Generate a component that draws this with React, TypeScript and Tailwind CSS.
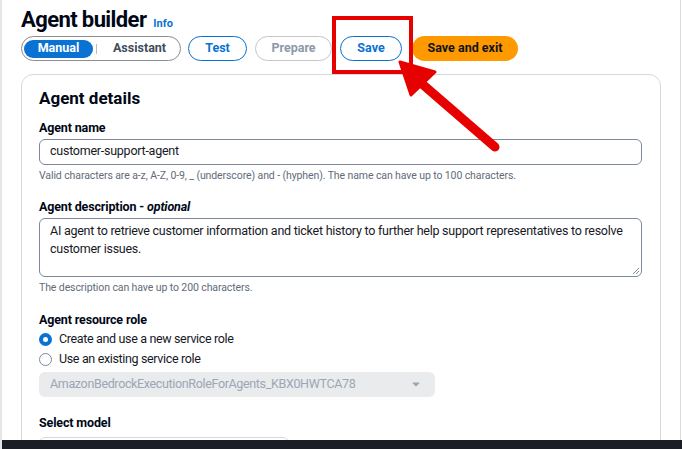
import { FaCaretDown } from "react-icons/fa";

const Radio = ({ checked, label }: { checked?: boolean; label: string }) => (
  <label className="flex items-center gap-[7px] h-[20px]">
    {checked ? (
      <span className="w-[13px] h-[13px] rounded-full bg-[#0972d3] flex items-center justify-center">
        <span className="w-[5px] h-[5px] rounded-full bg-white" />
      </span>
    ) : (
      <span className="w-[13px] h-[13px] rounded-full border-[1.5px] border-[#7d8998] bg-white" />
    )}
    <span className="text-[12.5px] tracking-[-0.35px] text-[#16191f]">{label}</span>
  </label>
);

const App = () => {
  return (
    <div
      className="relative w-[682px] h-[449px] overflow-hidden bg-white border-l-[2px] border-[#e4e6e8]"
      style={{ fontFamily: 'Roboto, "Open Sans", sans-serif' }}
    >
      <div className="absolute top-0 right-[1px] w-px h-full bg-[#dcdcdc]" />
      <div className="pl-[19px] pt-[8px]">
        {/* header */}
        <div className="flex items-baseline gap-[7px]">
          <h1 className="text-[22px] font-bold leading-[24px] tracking-[-0.6px] text-[#000716]">Agent builder</h1>
          <span className="text-[11px] font-bold text-[#0972d3]">Info</span>
        </div>
        <div className="flex items-center mt-[3px] h-[26px]">
          <div className="flex items-center h-[25px] w-[160px] rounded-full border-[1.5px] border-[#8c8c94] px-[2px]">
            <span className="h-[18px] w-[69px] rounded-full bg-[#0972d3] text-white text-[12.5px] font-bold flex items-center justify-center">Manual</span>
            <span className="w-px h-[10px] bg-[#b6bec9] ml-[3px]" />
            <span className="flex-1 text-center text-[12.5px] font-bold text-[#414d5c] pl-[4px]">Assistant</span>
          </div>
          <span className="ml-[7px] h-[25px] w-[59px] rounded-full border-[1.5px] border-[#0972d3] text-[#0972d3] text-[12.5px] font-bold flex items-center justify-center">Test</span>
          <span className="ml-[8px] h-[25px] w-[77px] rounded-full border-[1.5px] border-[#c6c6cd] text-[#8d99a8] text-[12.5px] font-bold flex items-center justify-center">Prepare</span>
          <span className="ml-[8px] h-[25px] w-[62px] rounded-full border-[1.5px] border-[#0972d3] text-[#0972d3] text-[12.5px] font-bold flex items-center justify-center">Save</span>
          <span className="ml-[10px] h-[25px] w-[106px] rounded-full bg-[#ff9900] text-[#0f141a] text-[12.5px] font-bold flex items-center justify-center">Save and exit</span>
        </div>

        {/* card */}
        <div className="mt-[12px] w-[640px] h-[400px] rounded-t-[12px] border border-[#d5d9dd] px-[17px] pt-[12px]">
          <h2 className="text-[17px] font-bold leading-[22px] text-[#000716]">Agent details</h2>

          <div className="mt-[11px]">
            <div className="text-[12.5px] font-bold tracking-[-0.15px] text-[#000716] leading-[16px]">Agent name</div>
            <div className="mt-[3px] h-[26px] w-[603px] rounded-[6px] border border-[#7d8998] flex items-center px-[10px] text-[12.5px] tracking-[-0.25px] text-[#16191f]">
              customer-support-agent
            </div>
            <div className="mt-[4px] text-[10.5px] leading-[14px] tracking-[-0.1px] text-[#5f6b7a]">
              Valid characters are a-z, A-Z, 0-9, _ (underscore) and - (hyphen). The name can have up to 100 characters.
            </div>
          </div>

          <div className="mt-[16px]">
            <div className="text-[12.5px] font-bold tracking-[-0.15px] text-[#000716] leading-[16px]">
              Agent description - <i>optional</i>
            </div>
            <div className="relative mt-[3px] h-[59px] w-[603px] rounded-[6px] border border-[#7d8998] px-[10px] pt-[3px] text-[12.5px] leading-[18px] tracking-[-0.25px] text-[#16191f]">
              AI agent to retrieve customer information and ticket history to further help support representatives to resolve customer issues.
              <svg className="absolute right-[2px] bottom-[2px]" width="6" height="6" viewBox="0 0 6 6">
                <path d="M6 0 L0 6 M6 3 L3 6" stroke="#7d8998" strokeWidth="1" />
              </svg>
            </div>
            <div className="mt-[4px] text-[10.5px] leading-[14px] tracking-[-0.1px] text-[#5f6b7a]">The description can have up to 200 characters.</div>
          </div>

          <div className="mt-[17px]">
            <div className="text-[12.5px] font-bold tracking-[-0.15px] text-[#000716] leading-[16px]">Agent resource role</div>
            <div className="mt-[2px] flex flex-col">
              <Radio checked label="Create and use a new service role" />
              <Radio label="Use an existing service role" />
            </div>
            <div className="mt-[2px] h-[25px] w-[396px] rounded-[6px] bg-[#e9ebed] flex items-center justify-between px-[11px] text-[12.5px] tracking-[-0.35px] text-[#9ba7b6]">
              <span>AmazonBedrockExecutionRoleForAgents_KBX0HWTCA78</span>
              <FaCaretDown className="text-[#9ba7b6] text-[12px] mr-[2px]" />
            </div>
          </div>

          <div className="mt-[18px]">
            <div className="text-[12.5px] font-bold tracking-[-0.15px] text-[#000716] leading-[16px]">Select model</div>
            <div className="mt-[6px] h-[26px] w-[250px] rounded-[6px] border border-[#d5d9dd]" />
          </div>
        </div>
      </div>

      {/* video bar */}
      <div className="absolute left-0 bottom-0 w-full h-[9px] bg-[#1b1e24]" />

      {/* annotation */}
      <svg className="absolute left-0 top-0 pointer-events-none" width="682" height="449">
        <rect x="332" y="18" width="77" height="54" fill="none" stroke="#e60000" strokeWidth="4" />
        <line x1="493" y1="147" x2="404" y2="70" stroke="#e60000" strokeWidth="9" strokeLinecap="round" />
        <polygon points="398,62 433,72 409,95" fill="#e60000" stroke="#e60000" strokeWidth="3" strokeLinejoin="round" />
      </svg>
    </div>
  );
};

export default App;
